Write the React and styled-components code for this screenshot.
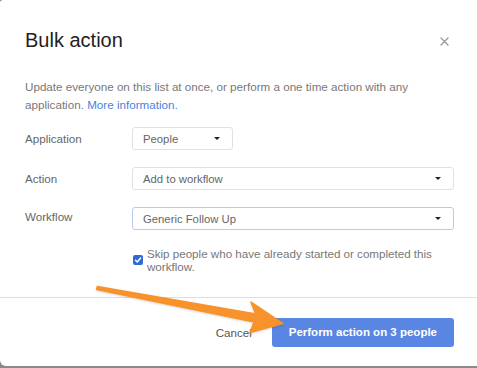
import React from "react";
import styled, { createGlobalStyle } from "styled-components";

const Global = createGlobalStyle`
  html, body {
    margin: 0;
    padding: 0;
    background: #8a8a8a;
  }
  body {
    font-family: "Liberation Sans", Arial, sans-serif;
    -webkit-font-smoothing: antialiased;
  }
`;

function Caret() {
  return <CaretIcon />;
}

function App() {
  return (
    <>
      <Global />
      <Dialog>
        <Header>
          <Title>Bulk action</Title>
          <Close aria-label="Close">
            <svg width="9" height="9" viewBox="0 0 9 9">
              <path d="M1 1 L8 8 M8 1 L1 8" stroke="#9a9a9a" strokeWidth="1.4" strokeLinecap="round" />
            </svg>
          </Close>
        </Header>

        <Body>
          <Description>
            Update everyone on this list at once, or perform a one time action with any
            application. <Link href="#">More information.</Link>
          </Description>

          <Form>
            <Label>Application</Label>
            <Select $width="101px">
              <span>People</span>
              <Caret />
            </Select>

            <Label>Action</Label>
            <Select>
              <span>Add to workflow</span>
              <Caret />
            </Select>

            <Label $shift="-2px">Workflow</Label>
            <Select $focused>
              <span>Generic Follow Up</span>
              <Caret />
            </Select>

            <span />
            <CheckRow>
              <Checkbox>
                <svg width="8" height="8" viewBox="0 0 8 8">
                  <path d="M1.5 4.2 L3.3 6 L6.6 2" stroke="#fff" strokeWidth="1.5" fill="none" strokeLinecap="round" strokeLinejoin="round" />
                </svg>
              </Checkbox>
              <CheckText>Skip people who have already started or completed this workflow.</CheckText>
            </CheckRow>
          </Form>
        </Body>

        <Footer>
          <CancelButton>Cancel</CancelButton>
          <PrimaryButton>Perform action on 3 people</PrimaryButton>
        </Footer>

        <Arrow viewBox="0 0 477 366" width="477" height="366">
          <path
            d="M97.3 286.5 L255.8 314.1 L251 302 L283 323.5 L250 332.5 L254.2 321.9 L96.7 289.5 Z"
            fill="#f8922a"
            stroke="#f8922a"
            strokeWidth="1.5"
            strokeLinejoin="round"
          />
        </Arrow>
      </Dialog>
    </>
  );
}

export default App;

const Dialog = styled.div`
  position: relative;
  display: flex;
  flex-direction: column;
  height: 366px;
  background: #fff;
  border-radius: 3px 0 0 6px;
  overflow: hidden;
`;

const Header = styled.div`
  display: flex;
  align-items: center;
  justify-content: space-between;
  padding: 28px 28px 0 25px;
`;

const Title = styled.h2`
  margin: 0;
  font-size: 20px;
  line-height: 24px;
  font-weight: 500;
  color: #222;
`;

const Close = styled.button`
  display: flex;
  padding: 0;
  border: 0;
  background: none;
  margin-top: 2px;
`;

const Body = styled.div`
  flex: 1;
  padding: 0 23px 0 25px;
`;

const Description = styled.p`
  margin: 26px 0 0;
  font-size: 11.65px;
  line-height: 18px;
  color: #777;
`;

const Link = styled.a`
  color: #4a7fe0;
  text-decoration: none;
`;

const Form = styled.div`
  display: grid;
  grid-template-columns: 107px 1fr;
  row-gap: 17px;
  align-items: center;
  margin-top: 13px;
`;

const Label = styled.div`
  font-size: 11.6px;
  color: #666;
  position: relative;
  top: ${(p) => p.$shift || "0"};
`;

const Select = styled.div`
  box-sizing: border-box;
  width: ${(p) => p.$width || "100%"};
  height: 23px;
  display: flex;
  align-items: center;
  justify-content: space-between;
  padding: 0 10px 0 10px;
  border: 1px solid ${(p) => (p.$focused ? "#b9c9f0" : "#dde1e8")};
  border-radius: 3px;
  font-size: 11.3px;
  color: #666;
`;

const CaretIcon = styled.span`
  width: 0;
  height: 0;
  border-left: 3px solid transparent;
  border-right: 3px solid transparent;
  border-top: 3px solid #222;
  margin-right: 2px;
`;

const CheckRow = styled.div`
  display: flex;
  align-items: center;
  gap: 4px;
`;

const Checkbox = styled.span`
  flex: none;
  display: flex;
  align-items: center;
  justify-content: center;
  width: 10px;
  height: 10px;
  border-radius: 2px;
  background: #2f6ad6;
  margin-left: 1px;
`;

const CheckText = styled.span`
  font-size: 11.6px;
  line-height: 13px;
  color: #777;
`;

const Footer = styled.div`
  height: 68px;
  border-top: 1px solid #dedede;
  display: flex;
  align-items: center;
  justify-content: flex-end;
  padding-right: 23px;
  gap: 10px;
`;

const CancelButton = styled.button`
  border: 0;
  background: none;
  padding: 0 10px;
  font-family: inherit;
  font-size: 11.6px;
  font-weight: 500;
  color: #555;
`;

const PrimaryButton = styled.button`
  height: 29px;
  padding: 0 17px;
  border: 0;
  border-radius: 3px;
  background: #5a86e3;
  color: #fff;
  font-family: inherit;
  font-size: 11.5px;
  font-weight: 600;
`;

const Arrow = styled.svg`
  position: absolute;
  top: 0;
  left: 0;
  pointer-events: none;
  filter: drop-shadow(0 1px 1px rgba(0, 0, 0, 0.15));
`;
